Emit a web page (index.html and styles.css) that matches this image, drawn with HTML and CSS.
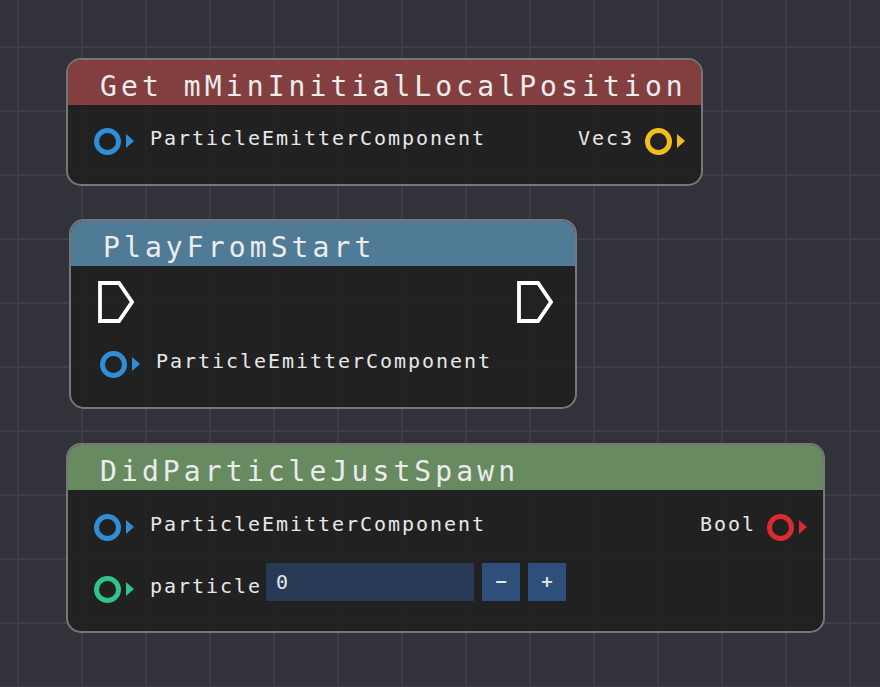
FILE: index.html
```html
<!DOCTYPE html>
<html>
<head>
<meta charset="utf-8">
<link rel="stylesheet" href="styles.css">
</head>
<body>
<div class="canvas">

  <div class="node node-get">
    <div class="header header-red"><span class="title">Get mMinInitialLocalPosition</span></div>
    <div class="body body-get">
      <div class="row">
        <div class="pin-group">
          <span class="pin pin-blue"></span><span class="arrow arrow-blue"></span>
          <span class="label">ParticleEmitterComponent</span>
        </div>
        <div class="pin-group">
          <span class="label">Vec3</span>
          <span class="pin pin-yellow"></span><span class="arrow arrow-yellow"></span>
        </div>
      </div>
    </div>
  </div>

  <div class="node node-play">
    <div class="header header-blue"><span class="title">PlayFromStart</span></div>
    <div class="body body-play">
      <div class="row exec-row">
        <svg class="exec" viewBox="0 0 36 42" width="36" height="42"><path d="M2 2 H21 L34 21 L21 40 H2 Z" fill="none" stroke="#ffffff" stroke-width="3.8" stroke-linejoin="miter"/></svg>
        <svg class="exec" viewBox="0 0 36 42" width="36" height="42"><path d="M2 2 H21 L34 21 L21 40 H2 Z" fill="none" stroke="#ffffff" stroke-width="3.8" stroke-linejoin="miter"/></svg>
      </div>
      <div class="row row-play2">
        <div class="pin-group">
          <span class="pin pin-blue"></span><span class="arrow arrow-blue"></span>
          <span class="label">ParticleEmitterComponent</span>
        </div>
      </div>
    </div>
  </div>

  <div class="node node-did">
    <div class="header header-green"><span class="title">DidParticleJustSpawn</span></div>
    <div class="body body-did">
      <div class="row">
        <div class="pin-group">
          <span class="pin pin-blue"></span><span class="arrow arrow-blue"></span>
          <span class="label">ParticleEmitterComponent</span>
        </div>
        <div class="pin-group">
          <span class="label">Bool</span>
          <span class="pin pin-red"></span><span class="arrow arrow-red"></span>
        </div>
      </div>
      <div class="row row-input">
        <div class="pin-group">
          <span class="pin pin-green"></span><span class="arrow arrow-green"></span>
          <span class="label label-tight">particle</span>
        </div>
        <div class="controls">
          <div class="input"><span class="input-text">0</span></div>
          <button class="step">&#8722;</button>
          <button class="step">+</button>
        </div>
      </div>
    </div>
  </div>

</div>
</body>
</html>
```
FILE: styles.css
```css
html, body {
  margin: 0;
  padding: 0;
  width: 880px;
  height: 687px;
  overflow: hidden;
}

body {
  background-color: #32323b;
  background-image:
    linear-gradient(to right, #3e3e47 0, #3e3e47 2px, transparent 2px),
    linear-gradient(to bottom, #3e3e47 0, #3e3e47 2px, transparent 2px);
  background-size: 64px 64px, 64px 64px;
  background-position: 17px 0, 0 46px;
  font-family: "DejaVu Sans Mono", "Liberation Mono", monospace;
  color: #e8e8e8;
}

.canvas {
  position: relative;
  width: 880px;
  height: 687px;
}

.node {
  position: absolute;
  box-sizing: border-box;
  border: 2px solid #777779;
  border-radius: 15px;
  overflow: hidden;
  background: rgba(29, 29, 29, 0.8);
  display: flex;
  flex-direction: column;
}

.node-get { left: 66px; top: 58px; width: 637px; height: 128px; }
.node-play { left: 69px; top: 219px; width: 508px; height: 190px; }
.node-did { left: 66px; top: 443px; width: 759px; height: 190px; }

.header {
  box-sizing: border-box;
  height: 45px;
  display: flex;
  align-items: center;
  padding-left: 32px;
  padding-top: 8px;
  flex: none;
}

.header-red { background: #833f40; }
.header-blue { background: #4f7b97; }
.header-green { background: #688a61; }

.title {
  font-size: 28px;
  letter-spacing: 4.1px;
  line-height: 1;
  color: #ececec;
}

.body {
  flex: 1;
  display: flex;
  flex-direction: column;
  padding: 0 16px 0 26px;
}

.body-get { padding-top: 21px; }
.body-play { padding-top: 15px; padding-left: 27px; padding-right: 22px; }
.body-did { padding-top: 22px; }

.row {
  display: flex;
  align-items: center;
  justify-content: space-between;
  height: 30px;
}

.exec-row {
  height: 42px;
}

.exec { display: block; }

.row-play2 {
  margin-top: 26px;
  padding-left: 2px;
}

.row-input {
  margin-top: 21px;
  height: auto;
  justify-content: flex-start;
}

.pin-group {
  display: flex;
  align-items: center;
}

.pin {
  box-sizing: border-box;
  width: 27px;
  height: 27px;
  border-radius: 50%;
  border: 5px solid;
  flex: none;
}

.pin-blue { border-color: #2f8ed6; }
.pin-yellow { border-color: #f2bd1f; }
.pin-red { border-color: #db2b30; }
.pin-green { border-color: #2fc48a; }

.arrow {
  width: 0;
  height: 0;
  border-top: 7px solid transparent;
  border-bottom: 7px solid transparent;
  border-left: 8px solid;
  margin-left: 5px;
  flex: none;
}

.arrow-blue { border-left-color: #2f8ed6; }
.arrow-yellow { border-left-color: #f2bd1f; }
.arrow-red { border-left-color: #db2b30; }
.arrow-green { border-left-color: #2fc48a; }

.label {
  font-size: 20px;
  letter-spacing: 1.96px;
  line-height: 1;
  margin: 0 11px 6px 16px;
  white-space: nowrap;
}

.pin-group .label:first-child {
  margin-left: 0;
}

.label-tight {
  margin-right: 4px;
}

.controls {
  display: flex;
  gap: 8px;
  margin-bottom: 14px;
}

.input {
  box-sizing: border-box;
  width: 208px;
  height: 38px;
  background: #273954;
  display: flex;
  align-items: center;
  padding-left: 10px;
}

.input-text {
  font-size: 20px;
  letter-spacing: 1.96px;
  line-height: 1;
}

.step {
  width: 38px;
  height: 38px;
  border: none;
  padding: 0;
  margin: 0;
  background: #2e4f79;
  color: #e8e8e8;
  font-family: "DejaVu Sans", sans-serif;
  font-size: 16px;
  font-weight: bold;
  line-height: 38px;
  text-align: center;
}
```
